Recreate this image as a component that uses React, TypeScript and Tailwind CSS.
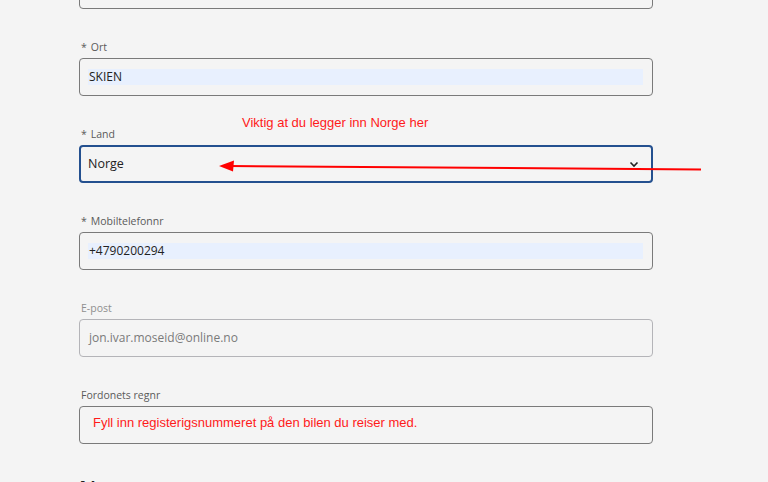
import React from "react";

type FieldProps = {
  label: string;
  required?: boolean;
  disabled?: boolean;
  value?: string;
  autofilled?: boolean;
  children?: React.ReactNode;
};

function Field({ label, required, disabled, value, autofilled, children }: FieldProps) {
  return (
    <div className="mt-[30px]">
      <div
        className={`h-4 leading-4 text-[10.5px] pl-[2px] ${
          disabled ? "text-[#8f8f8f]" : "text-[#5a5a5a]"
        }`}
      >
        {required && <span className="mr-[4px]">*</span>}
        {label}
      </div>
      <div
        className={`mt-[3px] h-[38px] rounded-[4px] border flex items-center pl-2 pr-[9px] ${
          disabled ? "border-[#b4b4b8] text-[#7a7a7a]" : "border-[#7a7a7a] text-[#222]"
        }`}
      >
        {children ?? (
          <div
            className={`flex-1 h-4 leading-4 text-[12px] pl-[1px] ${
              autofilled ? "bg-[#e8f0fe]" : ""
            }`}
          >
            {value}
          </div>
        )}
      </div>
    </div>
  );
}

export default function App() {
  return (
    <div
      className="relative h-[482px] w-[768px] overflow-hidden bg-[#f4f4f4]"
      style={{ fontFamily: '"Open Sans", "Noto Sans", sans-serif' }}
    >
      <div className="ml-[79px] w-[574px]">
        <div className="-mt-[30px] h-[39px] rounded-[4px] border border-[#7a7a7a]" />

        <Field label="Ort" required value="SKIEN" autofilled />

        <div className="mt-[30px]">
          <div className="h-4 leading-4 text-[10.5px] pl-[2px] text-[#5a5a5a]">
            <span className="mr-[4px]">*</span>
            Land
          </div>
          <div className="mt-[3px] h-[38px] rounded-[4px] border-2 border-[#24508f] flex items-center pl-[7px] pr-[12px] text-[#222]">
            <div className="flex-1 text-[12.5px] leading-4">Norge</div>
            <svg width="10" height="7" viewBox="0 0 10 7" fill="none">
              <path d="M1.5 1.5 L5 5 L8.5 1.5" stroke="#222" strokeWidth="1.6" />
            </svg>
          </div>
        </div>

        <Field label="Mobiltelefonnr" required value="+4790200294" autofilled />
        <Field label="E-post" disabled value="jon.ivar.moseid@online.no" />
        <Field label="Fordonets regnr">
          <div className="h-full" />
        </Field>

        <div className="mt-[30px] text-[22px] font-semibold text-[#222] leading-7">Notater</div>
      </div>

      {/* annotations */}
      <div
        className="absolute left-[242px] top-[115px] text-[13px] leading-4 text-[#ff1a1a]"
        style={{ fontFamily: '"Liberation Sans", Arial, sans-serif' }}
      >
        Viktig at du legger inn Norge her
      </div>
      <div
        className="absolute left-[93px] top-[415px] text-[13px] leading-4 text-[#ff1a1a]"
        style={{ fontFamily: '"Liberation Sans", Arial, sans-serif' }}
      >
        Fyll inn registerigsnummeret på den bilen du reiser med.
      </div>
      <svg className="absolute left-0 top-0" width="768" height="482" viewBox="0 0 768 482">
        <line x1="701" y1="169.5" x2="230" y2="166" stroke="#ff0000" strokeWidth="2" />
        <polygon points="219,166 234,160.5 233,171.5" fill="#ff0000" />
      </svg>
    </div>
  );
}
